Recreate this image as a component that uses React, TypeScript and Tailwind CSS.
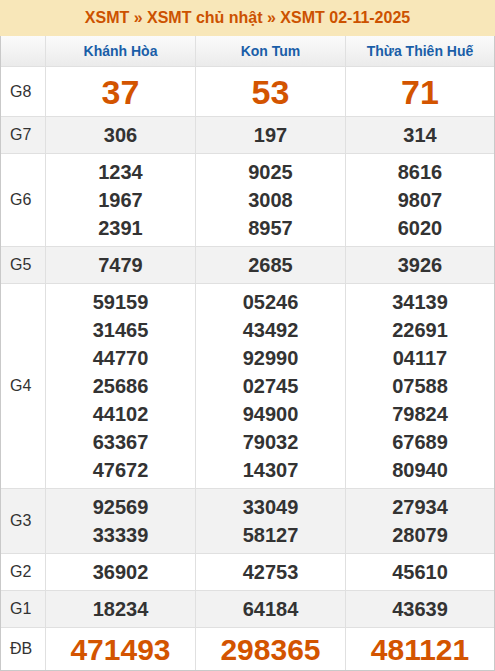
const provinces = ["Khánh Hòa", "Kon Tum", "Thừa Thiên Huế"];

type Row = {
  label: string;
  values: string[][];
  big?: "g8" | "db";
  shaded?: boolean;
};

const rows: Row[] = [
  { label: "G8", values: [["37"], ["53"], ["71"]], big: "g8" },
  { label: "G7", values: [["306"], ["197"], ["314"]], shaded: true },
  {
    label: "G6",
    values: [
      ["1234", "1967", "2391"],
      ["9025", "3008", "8957"],
      ["8616", "9807", "6020"],
    ],
  },
  { label: "G5", values: [["7479"], ["2685"], ["3926"]], shaded: true },
  {
    label: "G4",
    values: [
      ["59159", "31465", "44770", "25686", "44102", "63367", "47672"],
      ["05246", "43492", "92990", "02745", "94900", "79032", "14307"],
      ["34139", "22691", "04117", "07588", "79824", "67689", "80940"],
    ],
  },
  {
    label: "G3",
    values: [
      ["92569", "33339"],
      ["33049", "58127"],
      ["27934", "28079"],
    ],
    shaded: true,
  },
  { label: "G2", values: [["36902"], ["42753"], ["45610"]] },
  { label: "G1", values: [["18234"], ["64184"], ["43639"]], shaded: true },
  { label: "ĐB", values: [["471493"], ["298365"], ["481121"]], big: "db" },
];

// widths include the right border (border-box)
const colWidths = ["w-[150px] border-r", "w-[150px] border-r", "w-[148px]"];

export default function App() {
  return (
    <div
      className="w-[495px] h-[671px] bg-white"
      style={{ fontFamily: '"Liberation Sans", Arial, sans-serif' }}
    >
      {/* Title */}
      <div className="h-[36px] bg-[#f8e7b9] flex items-center justify-center text-[16px] font-bold text-[#cc5200]">
        XSMT » XSMT chủ nhật » XSMT 02-11-2025
      </div>

      <div className="border-l border-r border-b border-[#c9c9c9]">
        {/* Column headers */}
        <div className="flex h-[31px] border-b border-[#e0e0e0] bg-gradient-to-b from-[#fbfbfb] to-[#ebebeb]">
          <div className="w-[45px] shrink-0 border-r border-[#e0e0e0]" />
          {provinces.map((p, i) => (
            <div
              key={p}
              className={`${colWidths[i]} shrink-0 border-[#e0e0e0] flex items-center justify-center text-[14px] font-bold text-[#1a5ea8]`}
            >
              {p}
            </div>
          ))}
        </div>

        {rows.map((row, ri) => {
          const last = ri === rows.length - 1;
          const h =
            row.big === "g8"
              ? "h-[50px]"
              : row.big === "db"
              ? "h-[42px]"
              : "";
          return (
            <div
              key={row.label}
              className={`flex ${h} ${last ? "" : "border-b border-[#e0e0e0]"} ${
                row.shaded ? "bg-[#f2f2f2]" : "bg-white"
              }`}
            >
              <div className="w-[45px] shrink-0 border-r border-[#e0e0e0] flex items-center pl-[9px] text-[16px] text-[#333]">
                {row.label}
              </div>
              {row.values.map((vals, ci) => (
                <div
                  key={ci}
                  className={`${colWidths[ci]} shrink-0 border-[#e0e0e0] flex flex-col items-center justify-center ${
                    row.big ? "" : "py-[4px]"
                  }`}
                >
                  {vals.map((v, k) => (
                    <div
                      key={k}
                      className={
                        row.big === "g8"
                          ? "text-[34px] leading-[40px] font-bold text-[#d35400]"
                          : row.big === "db"
                          ? "text-[30px] leading-[38px] font-bold text-[#d35400] pt-[2px]"
                          : "text-[20px] leading-[28px] font-bold text-[#333]"
                      }
                    >
                      {v}
                    </div>
                  ))}
                </div>
              ))}
            </div>
          );
        })}
      </div>
    </div>
  );
}
